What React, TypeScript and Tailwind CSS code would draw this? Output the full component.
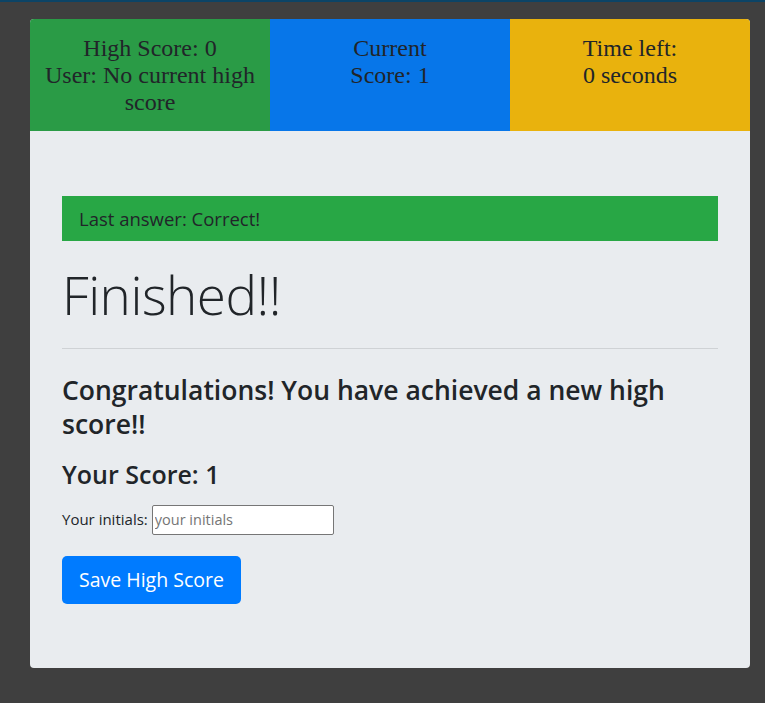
import React from 'react';

const sans = "font-['Open_Sans','Noto_Sans',sans-serif]";

const StatBox: React.FC<{ lines: string[]; color: string }> = ({ lines, color }) => (
  <div className={`${color} pt-[16px] pb-[15px] px-3 text-center font-['Liberation_Serif','Times_New_Roman',serif] text-[24px] leading-[27px] text-[#212529]`}>
    {lines.map((l) => (
      <div key={l}>{l}</div>
    ))}
  </div>
);

export default function App() {
  return (
    <div className="min-h-screen bg-[#3f3f3f]">
      <div className="h-[2px] bg-[#0c4466]" />
      <div className="ml-[30px] mt-[17px] w-[720px] overflow-hidden rounded-[4px] bg-[#e9ecef]">
        <div className="grid grid-cols-3">
          <StatBox color="bg-[#2a9b46]" lines={['High Score: 0', 'User: No current high', 'score']} />
          <StatBox color="bg-[#0776e9]" lines={['Current', 'Score: 1']} />
          <StatBox color="bg-[#e9b20d]" lines={['Time left:', '0 seconds']} />
        </div>

        <div className={`${sans} px-8 pt-[65px] pb-16 text-[#212529]`}>
          <div className="bg-[#28a745] py-[11px] pl-[17px] text-[18.5px] leading-[23px]">
            Last answer: Correct!
          </div>

          <h1 className="mt-[22px] mb-2 text-[53px] font-light leading-[1.2] tracking-[-0.5px]">Finished!!</h1>

          <hr className="mt-[21px] mb-4 border-t border-[#cfd2d5]" />

          <h3 className="mt-[24px] mb-2 text-[26.5px] font-semibold leading-[34px]">
            Congratulations! You have achieved a new high score!!
          </h3>

          <h4 className="mt-[19px] mb-2 text-[25px] font-semibold leading-[29px]">Your Score: 1</h4>

          <div className="mt-[16px] flex items-center text-[15px]">
            <label htmlFor="initials">Your initials:</label>
            <input
              id="initials"
              placeholder="your initials"
              className="ml-[4px] h-[30px] w-[182px] rounded-[2px] border border-[#767676] bg-white px-[2px] text-[14.5px] placeholder:text-[#757575]"
            />
          </div>

          <button className="mt-[21px] h-[48px] rounded-[5px] bg-[#007bff] px-[17px] text-[19.5px] text-white">
            Save High Score
          </button>
        </div>
      </div>
    </div>
  );
}
